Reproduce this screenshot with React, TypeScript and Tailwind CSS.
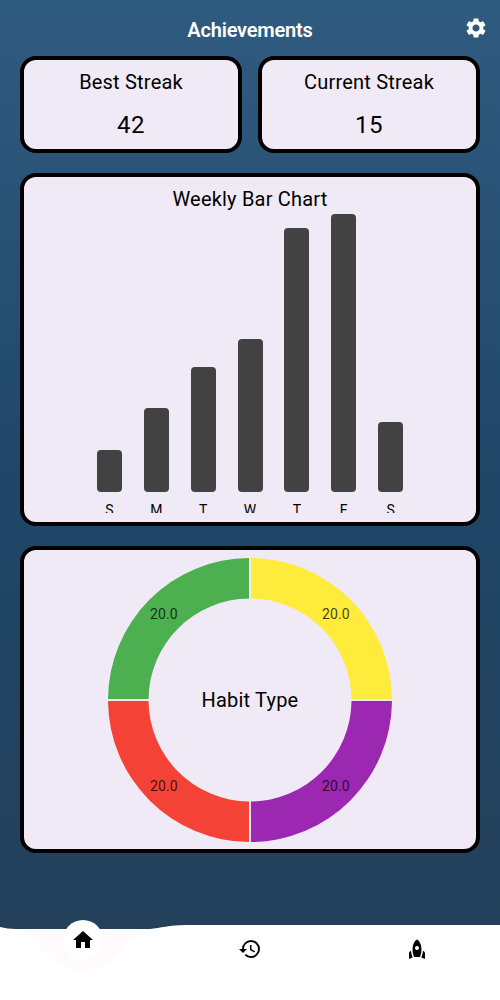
import { MdHome, MdHistory, MdRocket, MdSettings } from "react-icons/md";

const bars = [
  { label: "S", height: 42 },
  { label: "M", height: 84 },
  { label: "T", height: 125 },
  { label: "W", height: 153 },
  { label: "T", height: 264 },
  { label: "F", height: 278 },
  { label: "S", height: 70 },
];

const StatCard = ({ title, value }: { title: string; value: string }) => (
  <div className="flex h-[97px] flex-1 flex-col items-center rounded-2xl border-4 border-black bg-[#f0eaf6] pt-[8px] text-black">
    <div className="text-[20px] leading-[28px] font-[450] tracking-[0.2px]">{title}</div>
    <div className="mt-[13px] text-[24px] leading-[32px] font-[450] tracking-[0.5px]">{value}</div>
  </div>
);

const Donut = () => (
  <div className="relative h-[286px] w-[286px]">
    <svg width="286" height="286" viewBox="0 0 286 286" className="block">
      <path d="M144 1A142 142 0 0 1 285 142H244.500A101.500 101.500 0 0 0 144 41.500Z" fill="#ffeb3b" />
      <path d="M285 144A142 142 0 0 1 144 285V244.500A101.500 101.500 0 0 0 244.500 144Z" fill="#9c27b0" />
      <path d="M142 285A142 142 0 0 1 1 144H41.500A101.500 101.500 0 0 0 142 244.500Z" fill="#f44336" />
      <path d="M1 142A142 142 0 0 1 142 1V41.500A101.500 101.500 0 0 0 41.500 142Z" fill="#4caf50" />
    </svg>
    <div className="absolute top-[47px] left-[43px] text-[14px] leading-[20px] tracking-[0.1px] text-black/75">20.0</div>
    <div className="absolute top-[47px] left-[215px] text-[14px] leading-[20px] tracking-[0.1px] text-black/75">20.0</div>
    <div className="absolute top-[219px] left-[43px] text-[14px] leading-[20px] tracking-[0.1px] text-black/75">20.0</div>
    <div className="absolute top-[219px] left-[215px] text-[14px] leading-[20px] tracking-[0.1px] text-black/75">20.0</div>
    <div className="absolute inset-0 flex items-center justify-center text-[20px] font-[450] tracking-[0.2px] text-black">Habit Type</div>
  </div>
);

const BottomNav = () => (
  <div className="relative h-[75px] bg-white">
    <svg width="500" height="60" viewBox="0 0 500 60" className="absolute top-0 left-0">
      <path d="M20 3C40 14 50 45 83 45C116 45 126 14 150 3Z" fill="#fefafe" />
      <path d="M0 0V2C5 3 10 4 16 4H150C160 3 170 0 185 0Z" fill="#233f59" />
    </svg>
    <div className="absolute -top-[5px] left-[63px] flex h-[40px] w-[40px] items-center justify-center rounded-full bg-white">
      <MdHome className="text-[24px] text-black" />
    </div>
    <div className="absolute top-[12px] left-[238px]">
      <MdHistory className="text-[24px] text-black" />
    </div>
    <div className="absolute top-[12px] left-[405px]">
      <MdRocket className="text-[24px] text-black" />
    </div>
  </div>
);

export default function App() {
  return (
    <div className="flex h-[1000px] w-[500px] flex-col overflow-hidden bg-gradient-to-b from-[#305b80] via-[#1f4667] to-[#243f59] font-['Roboto',sans-serif]">
      <div className="relative flex h-[56px] items-center justify-center pt-[3px]">
        <span className="text-[20px] font-semibold tracking-[-0.2px] text-white">Achievements</span>
        <MdSettings className="absolute top-[16px] right-[12px] text-[24px] text-white" />
      </div>
      <div className="flex flex-col gap-[20px] px-[20px]">
        <div className="flex gap-[16px]">
          <StatCard title="Best Streak" value="42" />
          <StatCard title="Current Streak" value="15" />
        </div>
        <div className="relative h-[353px] overflow-hidden rounded-2xl border-4 border-black bg-[#f0eaf6]">
          <div className="pt-[8px] text-center text-[20px] leading-[28px] font-[450] tracking-[0.2px] text-black">Weekly Bar Chart</div>
          <div className="absolute top-[37px] left-0 flex h-[278px] w-full items-end justify-center gap-[21.85px]">
            {bars.map((bar, i) => (
              <div key={i} className="w-[25px] rounded-[4px] bg-[#424242]" style={{ height: bar.height }} />
            ))}
          </div>
          <div className="absolute top-[323px] left-0 flex h-[13px] w-full justify-center gap-[21.85px] overflow-hidden">
            {bars.map((bar, i) => (
              <div key={i} className="w-[25px] text-center text-[14px] leading-[20px] text-black">
                {bar.label}
              </div>
            ))}
          </div>
        </div>
        <div className="flex h-[307px] items-center justify-center rounded-2xl border-4 border-black bg-[#f0eaf6]">
          <Donut />
        </div>
      </div>
      <div className="flex-1" />
      <BottomNav />
    </div>
  );
}
